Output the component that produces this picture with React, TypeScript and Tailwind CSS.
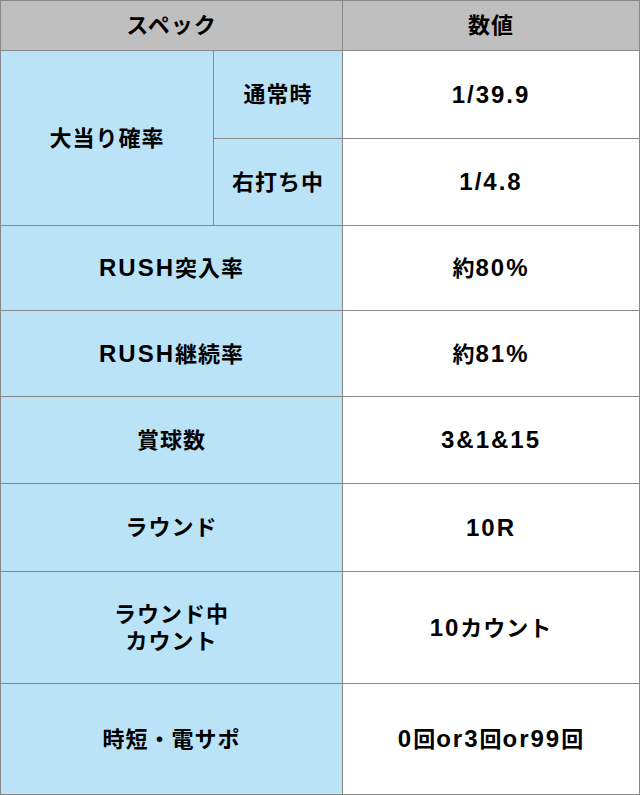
const jp = "font-['Liberation_Sans','Noto_Sans_CJK_JP',sans-serif] font-bold";

// latin runs are set a bit larger than the kana/kanji, like the source table
function Mixed({ text }: { text: string }) {
  const parts = text.match(/[\x20-\x7e]+|[^\x20-\x7e]+/g) ?? [];
  return (
    <>
      {parts.map((p, i) =>
        /^[\x20-\x7e]+$/.test(p) ? (
          <span key={i} className="text-[24px] tracking-[2px]">
            {p}
          </span>
        ) : (
          <span key={i}>{p}</span>
        )
      )}
    </>
  );
}

function Cell({
  children,
  className = "",
}: {
  children: React.ReactNode;
  className?: string;
}) {
  return (
    <div
      className={`flex flex-col items-center justify-center text-center text-[22px] leading-[27px] tracking-[1px] text-black ${className}`}
    >
      {children}
    </div>
  );
}

const rows: [string, string][] = [
  ["RUSH突入率", "約80%"],
  ["RUSH継続率", "約81%"],
  ["賞球数", "3&1&15"],
  ["ラウンド", "10R"],
  ["ラウンド中\nカウント", "10カウント"],
  ["時短・電サポ", "0回or3回or99回"],
];

export default function App() {
  return (
    <div className={`w-[640px] bg-white ${jp}`}>
      <div className="grid grid-cols-[212px_128px_296px] grid-rows-[49px_87px_86px_84px_85px_86px_87px_111px_110px] gap-px bg-[#888888] p-px">
        <Cell className="col-span-2 bg-[#bfbfbf]">スペック</Cell>
        <Cell className="bg-[#bfbfbf]">数値</Cell>

        <Cell className="row-span-2 bg-[#bae3f8]">大当り確率</Cell>
        <Cell className="bg-[#bae3f8]">通常時</Cell>
        <Cell className="bg-white">
          <div>
            <Mixed text="1/39.9" />
          </div>
        </Cell>
        <Cell className="bg-[#bae3f8]">右打ち中</Cell>
        <Cell className="bg-white">
          <div>
            <Mixed text="1/4.8" />
          </div>
        </Cell>

        {rows.map(([label, value]) => (
          <div key={label} className="contents">
            <Cell className="col-span-2 bg-[#bae3f8]">
              {label.split("\n").map((line) => (
                <div key={line}>
                  <Mixed text={line} />
                </div>
              ))}
            </Cell>
            <Cell className="bg-white">
              <div>
                <Mixed text={value} />
              </div>
            </Cell>
          </div>
        ))}
      </div>
    </div>
  );
}
